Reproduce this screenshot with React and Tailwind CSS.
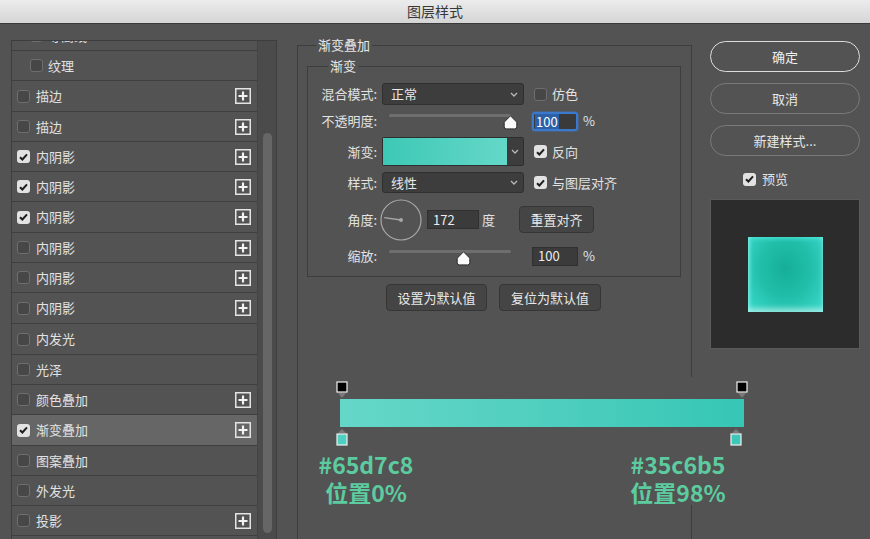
import React from 'react';

const layers = [
  { name: '纹理', h: 'h-[30px]', indent: true },
  { name: '描边', h: 'h-[31px]', plus: true },
  { name: '描边', h: 'h-[30px]', plus: true },
  { name: '内阴影', h: 'h-[30px]', on: true, plus: true },
  { name: '内阴影', h: 'h-[30px]', on: true, plus: true },
  { name: '内阴影', h: 'h-[31px]', on: true, plus: true },
  { name: '内阴影', h: 'h-[30px]', plus: true },
  { name: '内阴影', h: 'h-[30px]', plus: true },
  { name: '内阴影', h: 'h-[31px]', plus: true },
  { name: '内发光', h: 'h-[31px]' },
  { name: '光泽', h: 'h-[30px]' },
  { name: '颜色叠加', h: 'h-[30px]', plus: true },
  { name: '渐变叠加', h: 'h-[31px]', on: true, plus: true, active: true },
  { name: '图案叠加', h: 'h-[30px]' },
  { name: '外发光', h: 'h-[30px]' },
  { name: '投影', h: 'h-[30px]', plus: true },
];

const Check = ({ on }) =>
  on ? (
    <span className="w-[13px] h-[13px] shrink-0 rounded-[3px] bg-[#e2e2e2] flex items-center justify-center">
      <svg width="9" height="8" viewBox="0 0 9 8">
        <path d="M1 4.2 L3.4 6.5 L8 1.3" stroke="#1e1e1e" strokeWidth="2" fill="none" />
      </svg>
    </span>
  ) : (
    <span className="block w-[13px] h-[13px] shrink-0 rounded-[3px] border border-[#6e6e6e] bg-[#474747]" />
  );

const Plus = () => (
  <svg width="16" height="16" viewBox="0 0 16 16">
    <rect x="0.75" y="0.75" width="14.5" height="14.5" fill="none" stroke="#e4e4e4" strokeWidth="1.5" />
    <path d="M8 3.5 V12.5 M3.5 8 H12.5" stroke="#f2f2f2" strokeWidth="2.2" />
  </svg>
);

const Chevron = () => (
  <svg width="8" height="5" viewBox="0 0 8 5">
    <path d="M1 1 L4 4 L7 1" stroke="#b8b8b8" strokeWidth="1.3" fill="none" />
  </svg>
);

const Thumb = () => (
  <svg width="15" height="15" viewBox="0 0 15 15">
    <path
      d="M7.5 0.8 L13.8 7.2 L13.8 11.8 Q13.8 13.9 11.7 13.9 L3.3 13.9 Q1.2 13.9 1.2 11.8 L1.2 7.2 Z"
      fill="#fafafa"
      stroke="#2c2c2c"
      strokeWidth="1"
    />
  </svg>
);

// slider: track 7px in from the left edge, thumb placed by percent
const Slider = ({ pos }) => (
  <div className="relative w-[142px] h-full ml-[5px]">
    <div className="absolute left-[7px] top-[4px] w-[122px] h-[3px] rounded-full bg-[#6e6e6e]" />
    <div className="absolute top-[5px]" style={{ left: 7 + 122 * pos - 8 }}>
      <Thumb />
    </div>
  </div>
);

const Select = ({ value }) => (
  <div className="ml-[5px] w-[142px] h-full rounded-[3px] bg-[#3d3d3d] border border-[#2f2f2f] flex items-center justify-between pl-[8px] pr-[5px] text-[#e8e8e8]">
    <span>{value}</span>
    <Chevron />
  </div>
);

const Label = ({ children }) => <span className="w-[69px] shrink-0 text-right">{children}</span>;

const Btn = ({ children, w }) => (
  <div className={`${w} h-[27px] rounded-[4px] bg-[#454545] border border-[#363636] flex items-center justify-center text-[#e8e8e8]`}>
    {children}
  </div>
);

const Stop = ({ left, top, fill, up }) => (
  <div className="absolute" style={{ left, top }}>
    <svg width="12" height="18" viewBox="0 0 12 18">
      {up ? (
        <>
          <path d="M6 1 L10 5 L2 5 Z" fill="#7a7a7a" />
          <rect x="1" y="6" width="10" height="11" fill={fill} stroke="#f0f0f0" strokeWidth="1.2" />
        </>
      ) : (
        <>
          <rect x="1" y="1" width="10" height="10" fill={fill} stroke="#f0f0f0" strokeWidth="1.2" />
          <path d="M2 12 L10 12 L6 17 Z" fill="#7a7a7a" />
        </>
      )}
    </svg>
  </div>
);

export default function App() {
  return (
    <div className="relative w-[870px] h-[539px] overflow-hidden bg-[#535353] text-[13px] text-[#e2e2e2] font-['Noto_Sans_CJK_SC','Noto_Sans',sans-serif]">
      {/* title bar */}
      <div className="h-[24px] bg-gradient-to-b from-[#ececec] to-[#d5d5d5] border-b border-[#3a3a3a] flex items-center justify-center text-[14px] text-[#383838]">
        图层样式
      </div>

      <div className="flex items-start">
        {/* layer list */}
        <div className="ml-[11px] mt-[16px] h-[520px] flex border-t border-l border-r border-[#3d3d3d]">
          <div className="w-[245px] overflow-hidden">
            <div className="h-[30px] mt-[-20px] flex items-center pl-[18px] border-b border-[#3f3f3f]">
              <Check />
              <span className="ml-[5px]">等高线</span>
            </div>
            {layers.map((l, i) => (
              <div
                key={i}
                className={`${l.h} flex items-center border-b border-[#3f3f3f] pr-[6px] ${l.indent ? 'pl-[18px]' : 'pl-[5px]'} ${l.active ? 'bg-[#666666]' : 'bg-[#535353]'}`}
              >
                <Check on={l.on} />
                <span className={l.indent ? 'ml-[5px]' : 'ml-[6px]'}>{l.name}</span>
                <span className="flex-1" />
                {l.plus && <Plus />}
              </div>
            ))}
          </div>
          <div className="w-[19px] bg-[#4b4b4b] border-l border-[#444444]">
            <div className="ml-[5px] mt-[92px] w-[9px] h-[400px] rounded-full bg-[#666666]" />
          </div>
        </div>

        {/* gradient overlay settings */}
        <fieldset className="ml-[20px] mt-[12px] w-[395px] h-[520px] m-0 p-0 min-w-0 border border-[#3d3d3d]">
          <legend className="ml-[18px] px-[2px] leading-[18px] text-[#e8e8e8]">渐变叠加</legend>
          <div className="pl-[9px]">
            <fieldset className="mt-[3px] w-[374px] m-0 p-0 min-w-0 border border-[#3d3d3d]">
              <legend className="ml-[20px] px-[2px] leading-[18px] text-[#e8e8e8]">渐变</legend>
              <div className="pt-[8px] pb-[10px] flex flex-col">
                <div className="h-[22px] flex items-center">
                  <Label>混合模式:</Label>
                  <Select value="正常" />
                  <span className="ml-[10px]"><Check /></span>
                  <span className="ml-[5px]">仿色</span>
                </div>

                <div className="mt-[5px] h-[22px] flex items-center">
                  <Label>不透明度:</Label>
                  <Slider pos={1} />
                  <div className="ml-[8px] w-[46px] h-[19px] rounded-[3px] border-2 border-[#3a79cc] bg-[#3a3a3a] flex items-center pl-[1px] shadow-[0_0_0_1px_rgba(58,121,204,0.35)]">
                    <span className="bg-[#2c60a8] text-white leading-[15px] px-[1px]">100</span>
                  </div>
                  <span className="ml-[5px]">%</span>
                </div>

                <div className="mt-[5px] h-[29px] flex items-center">
                  <Label>渐变:</Label>
                  <div className="ml-[5px] w-[142px] h-full flex border border-[#2e2e2e] rounded-[2px]">
                    <div className="flex-1 bg-gradient-to-r from-[#3cc8b5] to-[#64d8c9]" />
                    <div className="w-[16px] bg-[#3d3d3d] flex items-center justify-center">
                      <Chevron />
                    </div>
                  </div>
                  <span className="ml-[10px]"><Check on /></span>
                  <span className="ml-[5px]">反向</span>
                </div>

                <div className="mt-[6px] h-[21px] flex items-center">
                  <Label>样式:</Label>
                  <Select value="线性" />
                  <span className="ml-[10px]"><Check on /></span>
                  <span className="ml-[5px]">与图层对齐</span>
                </div>

                <div className="mt-[6px] h-[41px] flex items-center">
                  <Label>角度:</Label>
                  <svg className="ml-[3px]" width="42" height="42" viewBox="0 0 42 42">
                    <circle cx="21" cy="21" r="20" fill="none" stroke="#a8a8a8" strokeWidth="1.2" />
                    <path d="M21 21 L4.2 18.6" stroke="#a8a8a8" strokeWidth="1.3" />
                    <circle cx="21" cy="21" r="2" fill="#a8a8a8" />
                  </svg>
                  <div className="ml-[5px] w-[52px] h-[19px] bg-[#3b3b3b] border border-[#303030] flex items-center pl-[5px] text-[#ececec]">
                    172
                  </div>
                  <span className="ml-[3px]">度</span>
                  <div className="ml-[24px]">
                    <Btn w="w-[75px]">重置对齐</Btn>
                  </div>
                </div>

                <div className="mt-[6px] h-[20px] flex items-center">
                  <Label>缩放:</Label>
                  <Slider pos={0.615} />
                  <div className="ml-[8px] w-[46px] h-[19px] bg-[#3b3b3b] border border-[#303030] flex items-center pl-[5px] text-[#ececec]">
                    100
                  </div>
                  <span className="ml-[5px]">%</span>
                </div>
              </div>
            </fieldset>

            <div className="mt-[7px] ml-[79px] flex gap-[12px]">
              <Btn w="w-[101px]">设置为默认值</Btn>
              <Btn w="w-[102px]">复位为默认值</Btn>
            </div>
          </div>
        </fieldset>

        {/* buttons + preview */}
        <div className="ml-[18px] mt-[17px] w-[150px] flex flex-col">
          <div className="flex flex-col gap-[11px]">
            <div className="h-[31px] rounded-full border-[1.5px] border-[#dcdcdc] flex items-center justify-center text-[#f0f0f0]">确定</div>
            <div className="h-[31px] rounded-full border border-[#7a7a7a] flex items-center justify-center text-[#e8e8e8]">取消</div>
            <div className="h-[31px] rounded-full border border-[#7a7a7a] flex items-center justify-center text-[#e8e8e8]">新建样式...</div>
          </div>
          <div className="mt-[13px] h-[20px] pl-[33px] flex items-center">
            <Check on />
            <span className="ml-[6px]">预览</span>
          </div>
          <div className="mt-[10px] w-[150px] h-[150px] bg-[#2c2c2c] border border-[#5a5a5a] flex items-center justify-center">
            <div className="w-[75px] h-[75px] bg-[radial-gradient(ellipse_at_50%_42%,#16ae99_0%,#20bea8_45%,#3bdacd_100%)] shadow-[inset_0_-4px_5px_rgba(255,255,255,0.45),inset_2px_2px_4px_rgba(90,240,230,0.6)]" />
          </div>
        </div>
      </div>

      {/* gradient editor annotation */}
      <div className="absolute left-[300px] top-[377px] w-[460px] h-[128px] bg-[#535353]">
        <div className="relative ml-[40px] mt-[22px] w-[404px] h-[28px] bg-gradient-to-r from-[#65d7c8] to-[#35c6b5]">
          <Stop left={-4.5} top={-18} fill="#000000" />
          <Stop left={395.5} top={-18} fill="#000000" />
          <Stop left={-4.5} top={29} fill="#4fcfc2" up />
          <Stop left={389.5} top={29} fill="#3cc7b8" up />
        </div>
        <div className="mt-[23px] flex text-[23px] leading-[28px] font-bold text-[#5ccca0]">
          <div className="ml-[6px] w-[120px] text-center">
            <div>#65d7c8</div>
            <div>位置0%</div>
          </div>
          <div className="ml-[192px] w-[120px] text-center">
            <div>#35c6b5</div>
            <div>位置98%</div>
          </div>
        </div>
      </div>
    </div>
  );
}
